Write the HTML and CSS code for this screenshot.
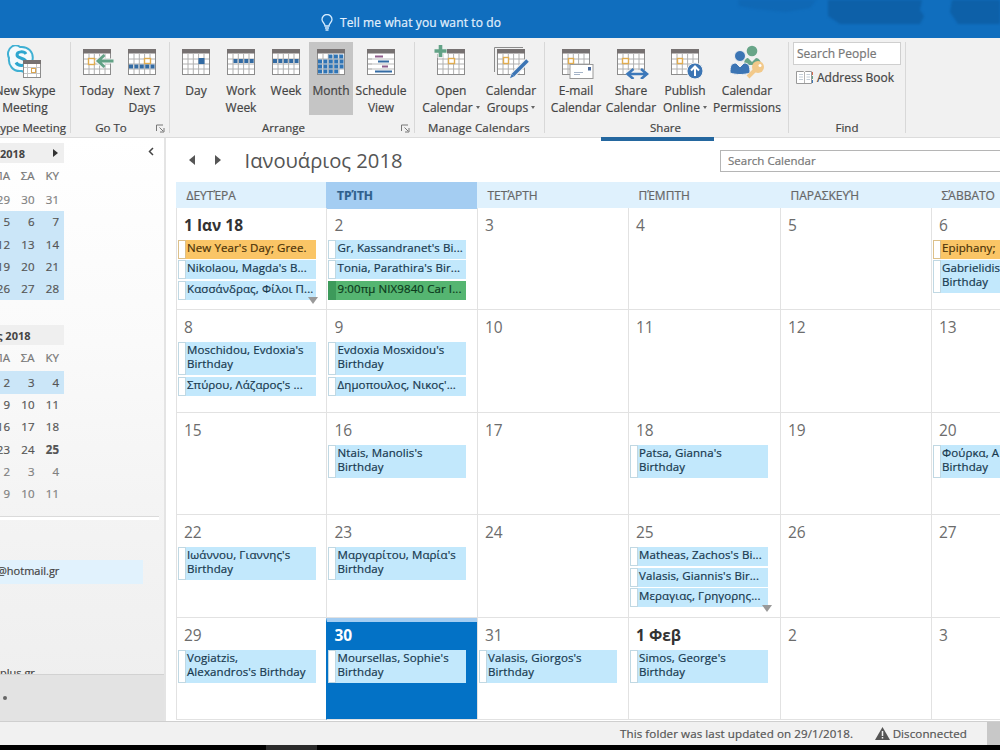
FILE: index.html
```html
<!DOCTYPE html>
<html lang="en">
<head>
    <meta charset="UTF-8">
    <title>Calendar</title>
    <link rel="stylesheet" href="styles.css">
</head>
<body>
    <svg class="defs">
        <symbol id="grid" viewBox="0 0 28 26">
            <rect x="0.5" y="0.5" width="27" height="25" fill="#fff" stroke="#8c8c8c"/>
            <path d="M6 5v20M11.3 5v20M16.6 5v20M22 5v20M1 10h26M1 15h26M1 20h26" stroke="#b0b0b0" fill="none"/>
            <rect width="28" height="4.500" fill="#767171"/>
        </symbol>
    </svg>

    <div class="app">
        <header class="titlebar">
            <div class="tell-me">
                <svg width="12" height="17" viewBox="0 0 12 17" fill="none" stroke="#d5ecff" stroke-width="1.3">
                    <path d="M4 12c0-3-3-3.500-3-6.500a5 5 0 0 1 10 0c0 3-3 3.500-3 6.500zM4 14h4M4.500 16h3"/>
                </svg>
                <span>Tell me what you want to do</span>
            </div>
            <svg class="clouds" width="270" height="25" viewBox="0 0 270 25">
                <path d="M8 0h78l-6 8-24 4-30-3-17-3z" fill="#0f68b5"/>
                <path d="M98 0h94l-2 10 4 6-4 8h-80l-12-8z" fill="#0d60a8"/>
                <path d="M222 0h48v24h-42l-8-12z" fill="#0d60a8"/>
            </svg>
        </header>

        <div class="ribbon">
            <div class="group skype">
                <div class="buttons">
                    <div class="btn">
                        <svg width="36" height="34" viewBox="0 0 36 34">
                            <path d="M5 1.500c3-2 6-1 8 .5 8-1 14 5 12.500 13 2 4 1 10-4 12-3 1-5 0-7-1C6 27 1 20 2 13 0 9 1 4 5 1.500z" fill="#f4fafc" stroke="#3fb0d3" stroke-width="2"/>
                            <path d="M19 9c-2-3-9-3-9 1s9 2.500 9 7-8 4.500-10 .5" fill="none" stroke="#2da7cf" stroke-width="3"/>
                            <rect x="16.500" y="15.500" width="17" height="17" fill="#fff" stroke="#8c8c8c"/>
                            <path d="M20.500 19v13M29.500 19v13M17 22.500h16M17 28.500h16" stroke="#c5c5c5"/>
                            <rect x="16" y="15" width="18" height="4" fill="#767171"/>
                            <rect x="24.500" y="23.500" width="4" height="4" fill="#fff" stroke="#d9a551"/>
                        </svg>
                        <span>New Skype<br>Meeting</span>
                    </div>
                </div>
                <div class="group-name">Skype Meeting</div>
            </div>

            <div class="group goto">
                <div class="buttons">
                    <div class="btn">
                        <svg width="36" height="34" viewBox="0 0 36 34">
                            <use href="#grid" x="4" y="4" width="28" height="26"/>
                            <rect x="9.500" y="13.500" width="6" height="6" fill="#fff" stroke="#e0ac4f" stroke-width="1.400"/>
                            <path d="M34 16H20M25 10.500l-6 5.500 6 5.500" stroke="#f1f1f1" stroke-width="5" fill="none"/>
                            <path d="M34.500 16H20M25.500 10l-6.500 6 6.500 6" stroke="#62a286" stroke-width="2.800" fill="none"/>
                        </svg>
                        <span>Today</span>
                    </div>
                    <div class="btn">
                        <svg width="36" height="34" viewBox="0 0 36 34">
                            <use href="#grid" x="4" y="4" width="28" height="26"/>
                            <rect x="20.500" y="13.500" width="6" height="5" fill="#fff" stroke="#e0ac4f" stroke-width="1.400"/>
                            <path d="M5 21.500h27" stroke="#336ba3" stroke-width="4" stroke-dasharray="4 1.400"/>
                        </svg>
                        <span>Next 7<br>Days</span>
                    </div>
                </div>
                <div class="group-name">Go To</div>
                <svg class="launcher" width="9" height="9" viewBox="0 0 9 9"><path d="M.5 7V1H7M3.500 3.500L7 7M8 4v4H4" fill="none" stroke="#777"/></svg>
            </div>

            <div class="group arrange">
                <div class="buttons">
                    <div class="btn">
                        <svg width="36" height="34" viewBox="0 0 36 34">
                            <use href="#grid" x="4" y="4" width="28" height="26"/>
                            <rect x="20.500" y="13" width="6" height="6" fill="#336ba3"/>
                        </svg>
                        <span>Day</span>
                    </div>
                    <div class="btn">
                        <svg width="36" height="34" viewBox="0 0 36 34">
                            <use href="#grid" x="4" y="4" width="28" height="26"/>
                            <path d="M10.500 16h21" stroke="#336ba3" stroke-width="4" stroke-dasharray="4 1.400"/>
                        </svg>
                        <span>Work<br>Week</span>
                    </div>
                    <div class="btn">
                        <svg width="36" height="34" viewBox="0 0 36 34">
                            <use href="#grid" x="4" y="4" width="28" height="26"/>
                            <path d="M5 16h27" stroke="#336ba3" stroke-width="4" stroke-dasharray="4 1.400"/>
                        </svg>
                        <span>Week</span>
                    </div>
                    <div class="btn active">
                        <svg width="36" height="34" viewBox="0 0 36 34">
                            <use href="#grid" x="4" y="4" width="28" height="26"/>
                            <path d="M15.500 11.500h16M5 16.500h27M5 21.500h27M5 26.500h21" stroke="#2f74b5" stroke-width="3.800" stroke-dasharray="4 1.400"/>
                        </svg>
                        <span>Month</span>
                    </div>
                    <div class="btn schedule">
                        <svg width="36" height="34" viewBox="0 0 36 34">
                            <use href="#grid" x="4" y="4" width="28" height="26"/>
                            <path d="M9 9h22v20H9z" fill="#fff"/>
                            <path d="M5 14h26M5 19h26M5 24h26" stroke="#bbb"/>
                            <path d="M12 11.500h8M19 21.500h6" stroke="#8f5d8c" stroke-width="2"/>
                            <path d="M15 16.500h11M12 26.500h17" stroke="#336ba3" stroke-width="2"/>
                        </svg>
                        <span>Schedule<br>View</span>
                    </div>
                </div>
                <div class="group-name">Arrange</div>
                <svg class="launcher" width="9" height="9" viewBox="0 0 9 9"><path d="M.5 7V1H7M3.500 3.500L7 7M8 4v4H4" fill="none" stroke="#777"/></svg>
            </div>

            <div class="group manage">
                <div class="buttons">
                    <div class="btn open">
                        <svg width="36" height="34" viewBox="0 0 36 34">
                            <use href="#grid" x="4" y="4" width="28" height="26"/>
                            <rect x="15.500" y="13.500" width="6" height="5" fill="#fff" stroke="#e0ac4f" stroke-width="1.400"/>
                            <path d="M1 6h13M7.500 0v13" stroke="#f1f1f1" stroke-width="6"/>
                            <path d="M1.500 6h12M7.500 0v12" stroke="#62a286" stroke-width="3.600"/>
                        </svg>
                        <span>Open<br>Calendar<i class="caret"></i></span>
                    </div>
                    <div class="btn">
                        <svg width="36" height="34" viewBox="0 0 36 34">
                            <path d="M1.500 27V2.500H30" fill="none" stroke="#8c8c8c"/>
                            <use href="#grid" x="4" y="4" width="28" height="26"/>
                            <rect x="10.500" y="12.500" width="5" height="6" fill="#fff" stroke="#e0ac4f" stroke-width="1.400"/>
                            <path d="M34 16L19 31" stroke="#f1f1f1" stroke-width="6"/>
                            <path d="M34.500 15.500L20 30" stroke="#3c75b4" stroke-width="3.500"/>
                            <path d="M18.700 28.700l2.600 2.600-4.300 2z" fill="#3c75b4"/>
                        </svg>
                        <span>Calendar<br>Groups<i class="caret"></i></span>
                    </div>
                </div>
                <div class="group-name">Manage Calendars</div>
            </div>

            <div class="group share">
                <div class="buttons">
                    <div class="btn">
                        <svg width="36" height="34" viewBox="0 0 36 34">
                            <use href="#grid" x="4" y="4" width="28" height="26"/>
                            <rect x="10.500" y="13.500" width="5" height="5" fill="#fff" stroke="#e0ac4f" stroke-width="1.400"/>
                            <rect x="12" y="19.500" width="23" height="14" fill="#fff" stroke="#999"/>
                            <path d="M16 27.500h9M16 29.500h6" stroke="#a5b4c8"/>
                            <rect x="30" y="22" width="3" height="3.500" fill="#4b6a9c"/>
                        </svg>
                        <span>E-mail<br>Calendar</span>
                    </div>
                    <div class="btn">
                        <svg width="36" height="34" viewBox="0 0 36 34">
                            <use href="#grid" x="4" y="4" width="28" height="26"/>
                            <rect x="9.500" y="13.500" width="6" height="5" fill="#fff" stroke="#e0ac4f" stroke-width="1.400"/>
                            <path d="M13 29h22" stroke="#f1f1f1" stroke-width="8"/>
                            <path d="M14.500 29h19M20.500 24l-6 5 6 5M28 24l6 5-6 5" stroke="#3c78ba" stroke-width="2.600" fill="none"/>
                        </svg>
                        <span>Share<br>Calendar</span>
                    </div>
                    <div class="btn publish">
                        <svg width="36" height="34" viewBox="0 0 36 34">
                            <use href="#grid" x="4" y="4" width="28" height="26"/>
                            <rect x="10.500" y="13.500" width="5" height="5" fill="#fff" stroke="#e0ac4f" stroke-width="1.400"/>
                            <circle cx="28" cy="26" r="8" fill="#3c75b4" stroke="#f1f1f1"/>
                            <path d="M28 31V22M24 25.500l4-4 4 4" stroke="#fff" stroke-width="2" fill="none"/>
                        </svg>
                        <span>Publish<br>Online<i class="caret"></i></span>
                    </div>
                    <div class="btn permissions">
                        <svg width="36" height="34" viewBox="0 0 36 34">
                            <circle cx="23" cy="6" r="5.300" fill="#68a588"/>
                            <path d="M15 20c0-5 2-7 4-7l4 4 4-4c3 0 5 3 5 7z" fill="#68a588"/>
                            <circle cx="11" cy="11" r="5.500" fill="#3c75b4" stroke="#f1f1f1"/>
                            <path d="M1 28c0-7 1-10 6-10l4 4 4-4c5 0 6 3 6 10-6 2-14 2-20 0z" fill="#3c75b4" stroke="#f1f1f1"/>
                            <circle cx="29" cy="22" r="6" fill="#f2c98a"/>
                            <path d="M26 25l-7 7" stroke="#f2c98a" stroke-width="4"/>
                            <circle cx="31" cy="20.500" r="1.500" fill="#fff"/>
                        </svg>
                        <span>Calendar<br>Permissions</span>
                    </div>
                </div>
                <div class="group-name">Share</div>
            </div>

            <div class="group find">
                <div class="search-people">Search People</div>
                <div class="address-book">
                    <svg width="18" height="15" viewBox="0 0 18 15">
                        <path d="M.5 1.500h7l1 1 1-1h6v12H.5z" fill="#fff" stroke="#999"/>
                        <path d="M8.500 3v10" stroke="#b5b5b5"/>
                        <path d="M3 4.500h4M3 7h4M3 9.500h4M10.500 4.500h3.500M10.500 7h3.500M10.500 9.500h3.500" stroke="#c3ced8"/>
                        <path d="M16.500 2v3" stroke="#d26a50"/>
                        <path d="M16.500 6v3" stroke="#62a286"/>
                        <path d="M16.500 10v3" stroke="#3c75b4"/>
                    </svg>
                    <span>Address Book</span>
                </div>
                <div class="group-name">Find</div>
            </div>
            <div class="share-line"></div>
        </div>

        <div class="main">
            <aside class="sidebar">
                <div class="collapse">
                    <svg width="6" height="9" viewBox="0 0 6 9"><path d="M5 1L1.500 4.500 5 8" fill="none" stroke="#444" stroke-width="1.500"/></svg>
                </div>
                <div class="mini">
                    <div class="mini-title first"><span>2018</span><i class="next"></i></div>
                    <div class="mini-row names"><span>ΠΑ</span><span>ΣΑ</span><span>ΚΥ</span></div>
                    <div class="mini-row other"><span>29</span><span>30</span><span>31</span></div>
                    <div class="mini-row selected"><span>5</span><span>6</span><span>7</span></div>
                    <div class="mini-row selected"><span>12</span><span>13</span><span>14</span></div>
                    <div class="mini-row selected"><span>19</span><span>20</span><span>21</span></div>
                    <div class="mini-row selected"><span>26</span><span>27</span><span>28</span></div>
                </div>
                <div class="mini second">
                    <div class="mini-title"><span>ς 2018</span></div>
                    <div class="mini-row names"><span>ΠΑ</span><span>ΣΑ</span><span>ΚΥ</span></div>
                    <div class="mini-row selected"><span>2</span><span>3</span><span>4</span></div>
                    <div class="mini-row"><span>9</span><span>10</span><span>11</span></div>
                    <div class="mini-row"><span>16</span><span>17</span><span>18</span></div>
                    <div class="mini-row"><span>23</span><span>24</span><b>25</b></div>
                    <div class="mini-row other"><span>2</span><span>3</span><span>4</span></div>
                    <div class="mini-row other"><span>9</span><span>10</span><span>11</span></div>
                </div>
                <div class="accounts">
                    <div class="account current">@hotmail.gr</div>
                    <div class="account">plus.gr</div>
                </div>
                <div class="nav-footer"><span class="dot"></span></div>
            </aside>

            <section class="calendar">
                <div class="cal-top">
                    <i class="prev"></i>
                    <i class="next"></i>
                    <h1>Ιανουάριος 2018</h1>
                    <div class="search-calendar">Search Calendar</div>
                </div>

                <div class="weekdays">
                    <div>ΔΕΥΤΈΡΑ</div>
                    <div class="today">ΤΡΊΤΗ</div>
                    <div>ΤΕΤΆΡΤΗ</div>
                    <div>ΠΈΜΠΤΗ</div>
                    <div>ΠΑΡΑΣΚΕΥΉ</div>
                    <div>ΣΆΒΒΑΤΟ</div>
                </div>

                <div class="month">
                    <div class="day">
                        <b>1 Ιαν 18</b>
                        <div class="event holiday">New Year's Day; Gree.</div>
                        <div class="event">Nikolaou, Magda's B...</div>
                        <div class="event">Κασσάνδρας, Φίλοι Π...</div>
                        <i class="more"></i>
                    </div>
                    <div class="day">
                        <span>2</span>
                        <div class="event">Gr, Kassandranet's Bi...</div>
                        <div class="event">Tonia, Parathira's Bir...</div>
                        <div class="event green">9:00πμ NIX9840 Car I...</div>
                    </div>
                    <div class="day"><span>3</span></div>
                    <div class="day"><span>4</span></div>
                    <div class="day"><span>5</span></div>
                    <div class="day">
                        <span>6</span>
                        <div class="event holiday">Epiphany;</div>
                        <div class="event">Gabrielidis<br>Birthday</div>
                    </div>

                    <div class="day">
                        <span>8</span>
                        <div class="event">Moschidou, Evdoxia's<br>Birthday</div>
                        <div class="event">Σπύρου, Λάζαρος's ...</div>
                    </div>
                    <div class="day">
                        <span>9</span>
                        <div class="event">Evdoxia Mosxidou's<br>Birthday</div>
                        <div class="event">Δημοπουλος, Νικος'...</div>
                    </div>
                    <div class="day"><span>10</span></div>
                    <div class="day"><span>11</span></div>
                    <div class="day"><span>12</span></div>
                    <div class="day"><span>13</span></div>

                    <div class="day"><span>15</span></div>
                    <div class="day">
                        <span>16</span>
                        <div class="event">Ntais, Manolis's<br>Birthday</div>
                    </div>
                    <div class="day"><span>17</span></div>
                    <div class="day">
                        <span>18</span>
                        <div class="event">Patsa, Gianna's<br>Birthday</div>
                    </div>
                    <div class="day"><span>19</span></div>
                    <div class="day">
                        <span>20</span>
                        <div class="event">Φούρκα, Α<br>Birthday</div>
                    </div>

                    <div class="day">
                        <span>22</span>
                        <div class="event">Ιωάννου, Γιαννης's<br>Birthday</div>
                    </div>
                    <div class="day">
                        <span>23</span>
                        <div class="event">Μαργαρίτου, Μαρία's<br>Birthday</div>
                    </div>
                    <div class="day"><span>24</span></div>
                    <div class="day">
                        <span>25</span>
                        <div class="event">Matheas, Zachos's Bi...</div>
                        <div class="event">Valasis, Giannis's Bir...</div>
                        <div class="event">Μεραγιας, Γρηγορης...</div>
                        <i class="more"></i>
                    </div>
                    <div class="day"><span>26</span></div>
                    <div class="day"><span>27</span></div>

                    <div class="day">
                        <span>29</span>
                        <div class="event">Vogiatzis,<br>Alexandros's Birthday</div>
                    </div>
                    <div class="day today">
                        <b>30</b>
                        <div class="event">Moursellas, Sophie's<br>Birthday</div>
                    </div>
                    <div class="day">
                        <span>31</span>
                        <div class="event">Valasis, Giorgos's<br>Birthday</div>
                    </div>
                    <div class="day">
                        <b>1 Φεβ</b>
                        <div class="event">Simos, George's<br>Birthday</div>
                    </div>
                    <div class="day"><span>2</span></div>
                    <div class="day"><span>3</span></div>
                </div>
            </section>
        </div>

        <footer class="statusbar">
            <span>This folder was last updated on 29/1/2018.</span>
            <svg width="15" height="13" viewBox="0 0 15 13"><path d="M7.500 0L15 13H0z" fill="#555"/><path d="M7.500 4v5M7.500 10v1.500" stroke="#f1f1f1" stroke-width="1.500"/></svg>
            <span class="offline">Disconnected</span>
            <div class="view-switch"></div>
        </footer>
        <div class="taskbar"><div class="task"></div></div>
    </div>
</body>
</html>
```

FILE: styles.css
```css
* {
    box-sizing: border-box;
}
body {
    margin: 0;
    font-family: "Open Sans", "Noto Sans", sans-serif;
    font-size: 12px;
    color: #444;
    background: #fff;
    -webkit-text-stroke: 0.2px;
}
.defs {
    display: block;
    width: 0;
    height: 0;
}
.app {
    width: 1000px;
    height: 750px;
    overflow: hidden;
    display: flex;
    flex-direction: column;
}

/* title bar */
.titlebar {
    height: 38px;
    flex: none;
    background: #106ebe;
    display: flex;
    justify-content: space-between;
    color: #e3f1fd;
}
.tell-me {
    display: flex;
    align-items: center;
    gap: 7px;
    padding: 6px 0 0 321px;
    letter-spacing: 0.12px;
}
.clouds {
    filter: blur(1px);
}

/* ribbon */
.ribbon {
    position: relative;
    height: 100px;
    flex: none;
    display: flex;
    padding-top: 4px;
    background: #f1f1f1;
    border-bottom: 1px solid #dcdcdc;
}
.group {
    position: relative;
    height: 91px;
    display: flex;
    flex-direction: column;
    border-right: 1px solid #d8d8d8;
}
.buttons {
    display: flex;
    height: 73px;
    gap: 1px;
}
.btn {
    width: 44px;
    display: flex;
    flex-direction: column;
    align-items: center;
    padding-top: 3px;
    line-height: 17px;
    text-align: center;
    white-space: nowrap;
}
.btn svg {
    flex: none;
    margin-bottom: 3px;
}
.btn.active {
    background: #c5c5c5;
}
.group-name {
    margin-top: 5px;
    height: 15px;
    line-height: 15px;
    font-size: 11.5px;
    text-align: center;
    white-space: nowrap;
}
.launcher {
    position: absolute;
    right: 4px;
    bottom: 0;
}
.caret {
    display: inline-block;
    margin-left: 3px;
    vertical-align: 3px;
    border: 2.5px solid transparent;
    border-top: 3px solid #666;
    border-bottom: 0;
}
.skype {
    width: 71px;
    padding-right: 4px;
}
.skype .buttons {
    margin-left: -6px;
}
.skype .btn {
    width: 62px;
}
.skype .group-name {
    display: flex;
    justify-content: flex-end;
}
.goto {
    width: 99px;
    padding-left: 4px;
}
.goto .group-name {
    padding-right: 22px;
}
.arrange {
    width: 245px;
    padding-left: 4px;
}
.arrange .group-name {
    padding-right: 21px;
}
.arrange .schedule {
    width: 54px;
}
.manage {
    width: 130px;
    padding-left: 6px;
}
.manage .buttons {
    gap: 0;
}
.manage .btn {
    width: 60px;
}
.manage .group-name {
    padding-right: 7px;
    letter-spacing: 0.15px;
}
.share {
    width: 244px;
    padding-left: 4px;
}
.share .btn {
    width: 54px;
}
.share .publish {
    width: 52px;
}
.share .permissions {
    width: 70px;
}
.share .group-name {
    padding-right: 6px;
}
.find {
    width: 117px;
    padding-left: 4px;
}
.search-people {
    width: 108px;
    height: 23px;
    flex: none;
    line-height: 21px;
    padding-left: 3px;
    background: #fff;
    border: 1px solid #cfcfcf;
    color: #777;
}
.address-book {
    display: flex;
    flex: none;
    align-items: center;
    gap: 3px;
    height: 25px;
    margin-bottom: 25px;
    padding-left: 3px;
    font-size: 12px;
    white-space: nowrap;
}
.find .group-name {
    padding-right: 4px;
}
.share-line {
    position: absolute;
    left: 601px;
    bottom: -4px;
    width: 113px;
    height: 4px;
    background: #24679f;
}

/* folder pane */
.main {
    height: 583px;
    flex: none;
    display: flex;
}
.sidebar {
    position: relative;
    width: 166px;
    flex: none;
    display: flex;
    flex-direction: column;
    padding-top: 5px;
    overflow: hidden;
    background: linear-gradient(#fff, #fafafa 35%, #f4f4f4 62%, #eee);
    border-right: 2px solid #e4e4e4;
}
.collapse {
    position: absolute;
    left: 148px;
    top: 5px;
}
.mini {
    width: 64px;
}
.mini.second {
    margin-top: 25px;
}
.mini-title {
    display: flex;
    align-items: center;
    height: 20px;
    background: #efefef;
    font-size: 11px;
    font-weight: bold;
    white-space: nowrap;
    -webkit-text-stroke: 0;
}
.mini-title.first {
    gap: 28px;
}
.mini-title:not(.first) span {
    margin-left: -3px;
}
.mini-row {
    display: grid;
    grid-template-columns: repeat(3, 24.5px);
    height: 22.3px;
    margin-left: -14.5px;
    padding: 0 5px 1px 0;
    align-items: center;
    text-align: right;
    color: #555;
    font-size: 11.5px;
}
.mini-row.names {
    height: 26px;
    color: #777;
}
.mini-row.other {
    color: #808080;
}
.mini-row.selected {
    background: #cbe6f8;
}
.next {
    border: 4px solid transparent;
    border-left: 5px solid #333;
    border-right: 0;
}
.prev {
    border: 4px solid transparent;
    border-right: 5px solid #333;
    border-left: 0;
}
.accounts {
    margin-top: 11px;
    margin-right: 5px;
    height: 158px;
    overflow: hidden;
    border-top: 1px solid #dadada;
    box-shadow: inset 0 3px #fff;
    font-size: 11px;
    padding-top: 43px;
}
.account {
    width: 143px;
    height: 25px;
    line-height: 23px;
}
.account.current {
    height: 24px;
    line-height: 21px;
    background: #e1f2fd;
    margin-bottom: 77px;
    text-indent: -3px;
}
.nav-footer {
    flex: 1;
    background: #e3e3e3;
    border-top: 1px solid #d2d2d2;
    display: flex;
    align-items: center;
}
.dot {
    width: 4px;
    height: 4px;
    margin-left: 3px;
    border-radius: 50%;
    background: #666;
}

/* month view */
.calendar {
    flex: 1;
    min-width: 0;
    padding-left: 9.5px;
    overflow: hidden;
}
.cal-top {
    display: flex;
    align-items: center;
    height: 44px;
    padding-left: 13px;
}
.cal-top i {
    border-top-width: 5px;
    border-bottom-width: 5px;
}
.cal-top .prev {
    border-right: 6px solid #555;
}
.cal-top .next {
    margin-left: 20px;
    border-left: 6px solid #555;
}
.cal-top h1 {
    width: 475.5px;
    flex: none;
    margin: 0 0 0 24px;
    font-size: 20.2px;
    font-weight: normal;
    color: #555;
    -webkit-text-stroke: 0;
}
.search-calendar {
    width: 300px;
    flex: none;
    height: 22px;
    margin-top: 2px;
    line-height: 20px;
    padding-left: 7px;
    border: 1px solid #b5b5b5;
    font-size: 11.5px;
    color: #777;
}
.weekdays,
.month {
    display: grid;
    grid-template-columns: 150.5px 150.5px 151px 152px 151px 151px;
}
.weekdays {
    height: 26px;
    background: #dff1fd;
    line-height: 27px;
    color: #666;
}
.weekdays div {
    padding-left: 11px;
}
.weekdays .today {
    background: #a4cdf2;
    color: #2f5f8c;
    font-weight: bold;
}
.month {
    grid-auto-rows: 102.4px;
}
.day {
    position: relative;
    border-left: 1px solid #e2e2e2;
    border-bottom: 1px solid #e2e2e2;
    padding: 6px 10px 0 1px;
}
.day > span,
.day > b {
    display: block;
    height: 26px;
    line-height: 22px;
    padding-left: 6.5px;
    font-size: 15.5px;
    font-weight: normal;
    color: #6c6c6c;
    -webkit-text-stroke: 0;
}
.day > b {
    color: #333;
    font-weight: bold;
}
.day.today {
    background: #0372c6;
    border-top: 4px solid #a4cdf2;
    border-left-color: #0372c6;
    padding-top: 2px;
}
.day.today > b {
    color: #fff;
}
.event {
    position: relative;
    width: 138px;
    min-height: 19px;
    padding: 1px 0 4px 9.5px;
    margin-bottom: 1.4px;
    line-height: 14px;
    font-size: 11.5px;
    letter-spacing: 0.1px;
    color: #17384e;
    white-space: nowrap;
    overflow: hidden;
    background: #c2e8fc;
}
/* free/busy strip on the left edge of an appointment */
.event::before {
    content: "";
    position: absolute;
    left: 0;
    top: 0;
    bottom: 0;
    width: 6px;
    background: #fff;
    border: 1px solid #c0d8e3;
}
.event.holiday {
    background: #fac566;
    color: #4a3208;
}
.event.holiday::before {
    border-color: #dcc08a;
}
.event.green {
    background: #55b571;
    color: #0c3a1c;
}
.event.green::before {
    background: #3d9a5b;
    border-color: #3d9a5b;
}
.more {
    position: absolute;
    right: 8px;
    bottom: 5px;
    border: 5px solid transparent;
    border-top: 7px solid #999;
    border-bottom: 0;
}

/* bottom */
.statusbar {
    height: 24px;
    flex: none;
    display: flex;
    align-items: center;
    padding: 0 0 1px 620px;
    background: #f1f1f1;
    border-top: 1px solid #cfcfcf;
    font-size: 11.6px;
    letter-spacing: 0.08px;
    color: #555;
    white-space: nowrap;
}
.statusbar svg {
    margin-left: auto;
    margin-right: 3px;
}
.view-switch {
    width: 13px;
    height: 23px;
    margin-left: 20px;
    background: #c8c8c8;
}
.taskbar {
    height: 5px;
    flex: none;
    background: #000;
    padding-left: 266px;
}
.task {
    width: 51px;
    height: 5px;
    background: #2b2b2b;
}
```
